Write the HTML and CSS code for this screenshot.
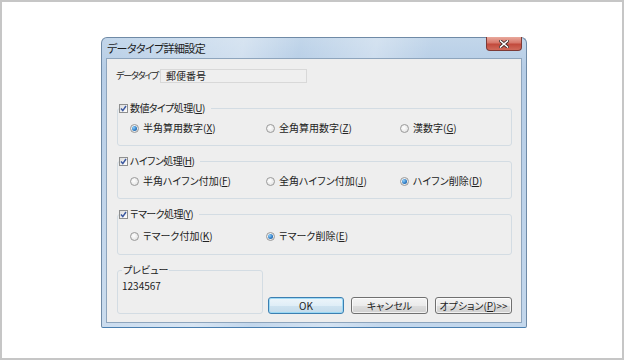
FILE: index.html
```html
<!DOCTYPE html>
<html lang="ja">
<head>
<meta charset="utf-8">
<title>データタイプ詳細設定</title>
<link rel="stylesheet" href="styles.css">
</head>
<body>
<div class="page">
  <div class="dialog">
    <div class="titlebar">
      <span class="title">データタイプ詳細設定</span>
      <span class="close">
        <svg width="10" height="8" viewBox="0 0 10 8"><path d="M1.5 1 L8.5 7 M8.5 1 L1.5 7" stroke="#3a2626" stroke-width="3.2" stroke-linecap="square"/><path d="M1.5 1 L8.5 7 M8.5 1 L1.5 7" stroke="#fff" stroke-width="1.6" stroke-linecap="square"/></svg>
      </span>
    </div>
    <div class="client">
      <div class="type-row">
        <span class="type-label">データタイプ</span>
        <span class="field">郵便番号</span>
      </div>

      <fieldset class="group">
        <legend class="legend"><span class="check"><svg width="7" height="7" viewBox="0 0 7 7"><path d="M1 3.6 L2.8 5.6 L6 1" fill="none" stroke="#3b58a0" stroke-width="1.5"/></svg></span><span class="legend-text">数値タイプ処理(<u>U</u>)</span></legend>
        <div class="options">
          <span class="opt"><span class="radio on"></span>半角算用数字(<u>X</u>)</span>
          <span class="opt"><span class="radio"></span>全角算用数字(<u>Z</u>)</span>
          <span class="opt"><span class="radio"></span>漢数字(<u>G</u>)</span>
        </div>
      </fieldset>

      <fieldset class="group">
        <legend class="legend"><span class="check"><svg width="7" height="7" viewBox="0 0 7 7"><path d="M1 3.6 L2.8 5.6 L6 1" fill="none" stroke="#3b58a0" stroke-width="1.5"/></svg></span><span class="legend-text">ハイフン処理(<u>H</u>)</span></legend>
        <div class="options">
          <span class="opt"><span class="radio"></span>半角ハイフン付加(<u>F</u>)</span>
          <span class="opt"><span class="radio"></span>全角ハイフン付加(<u>J</u>)</span>
          <span class="opt"><span class="radio on"></span>ハイフン削除(<u>D</u>)</span>
        </div>
      </fieldset>

      <fieldset class="group group-tall">
        <legend class="legend"><span class="check"><svg width="7" height="7" viewBox="0 0 7 7"><path d="M1 3.6 L2.8 5.6 L6 1" fill="none" stroke="#3b58a0" stroke-width="1.5"/></svg></span><span class="legend-text">〒マーク処理(<u>Y</u>)</span></legend>
        <div class="options">
          <span class="opt"><span class="radio"></span>〒マーク付加(<u>K</u>)</span>
          <span class="opt"><span class="radio on"></span>〒マーク削除(<u>E</u>)</span>
        </div>
      </fieldset>

      <div class="bottom">
        <fieldset class="preview">
          <legend class="preview-legend">プレビュー</legend>
          <div class="preview-text">1234567</div>
        </fieldset>
        <div class="buttons">
          <span class="btn btn-default">OK</span>
          <span class="btn">キャンセル</span>
          <span class="btn">オプション(<u>P</u>)&gt;&gt;</span>
        </div>
      </div>
    </div>
  </div>
</div>
</body>
</html>
```

FILE: styles.css
```css
html, body {
  margin: 0;
  padding: 0;
}

body {
  width: 624px;
  height: 360px;
  overflow: hidden;
  background: #ffffff;
  font-family: "Noto Sans CJK JP", "Noto Sans", sans-serif;
  font-feature-settings: "palt";
  color: #222222;
}

.page {
  box-sizing: border-box;
  width: 624px;
  height: 360px;
  border: 2px solid #c6c6c6;
  padding: 35px 0 0 99px;
}

.dialog {
  box-sizing: border-box;
  width: 426px;
  height: 291px;
  border: 1px solid #6f8aa6;
  border-bottom-color: #4a7fb0;
  border-radius: 6px 6px 2px 2px;
  background:
    linear-gradient(100deg, rgba(255,255,255,0) 0%, rgba(255,255,255,0.35) 30%, rgba(255,255,255,0) 42%, rgba(255,255,255,0.3) 58%, rgba(255,255,255,0) 70%),
    linear-gradient(#c2d6ea, #b6cde6 30px, #c3d7ec);
  padding: 0 4px 4px 4px;
  display: flex;
  flex-direction: column;
}

.titlebar {
  height: 20px;
  display: flex;
  justify-content: space-between;
  align-items: flex-start;
}

.title {
  font-size: 11px;
  line-height: 20px;
  letter-spacing: -0.6px;
  color: #1c1c1c;
  padding-left: 1px;
  white-space: nowrap;
}

.close {
  box-sizing: border-box;
  width: 36px;
  height: 14px;
  margin-top: -1px;
  border: 1px solid #7d3a36;
  border-top: none;
  border-radius: 0 0 4px 4px;
  background: linear-gradient(#e9a99c, #d7776a 45%, #c24a3c 55%, #d06a5a);
  display: flex;
  align-items: center;
  justify-content: center;
}

.client {
  box-sizing: border-box;
  height: 265px;
  border: 1px solid #8ea5bd;
  background: #eeeeee;
  padding: 10px 9px 0 10px;
  display: flex;
  flex-direction: column;
  font-size: 10px;
  line-height: 12px;
  white-space: nowrap;
}

.type-row {
  display: flex;
  align-items: center;
  height: 14px;
}

.type-label {
  width: 43px;
  margin-left: -1px;
  font-size: 9px;
  letter-spacing: -1.2px;
}

.field {
  box-sizing: border-box;
  width: 147px;
  height: 14px;
  margin-left: 1px;
  border: 1px solid #d8d8d8;
  background: #efefef;
  padding-left: 5px;
  line-height: 12px;
}

.group {
  margin: 19px 0 0 0;
  padding: 0;
  border: 1px solid #d3dce3;
  border-radius: 3px;
  min-width: 0;
  height: 44px;
  box-sizing: border-box;
}

.group + .group {
  margin-top: 9px;
}

.group-tall {
  height: 47px;
}

.legend {
  margin-left: 1px;
  padding: 0 6px 0 0;
  display: flex;
  align-items: center;
  height: 12px;
}

.legend-text {
  letter-spacing: -0.6px;
}

.check {
  box-sizing: border-box;
  width: 9px;
  height: 9px;
  border: 1px solid #8e8f8f;
  background: linear-gradient(135deg, #dcdcdc, #ffffff);
  margin-right: 2px;
  display: flex;
  align-items: center;
  justify-content: center;
}

.options {
  display: grid;
  grid-template-columns: 136px 134px auto;
  padding: 8px 0 0 12px;
}

.group-tall .options {
  padding-top: 10px;
}

.opt {
  display: flex;
  align-items: center;
}

.radio {
  box-sizing: border-box;
  width: 9px;
  height: 9px;
  border-radius: 50%;
  border: 1px solid #9a9a9a;
  background: radial-gradient(circle at 40% 40%, #ffffff, #dcdcdc);
  margin-right: 4px;
  display: flex;
  align-items: center;
  justify-content: center;
}

.radio.on::after {
  content: "";
  width: 5px;
  height: 5px;
  border-radius: 50%;
  background: radial-gradient(circle at 35% 35%, #8fd0fb, #2a78c2 60%, #1d4f8a);
}

u {
  text-decoration: underline;
  text-underline-offset: 1px;
}

.bottom {
  display: flex;
  align-items: flex-end;
  justify-content: space-between;
  margin-top: 9px;
}

.preview {
  box-sizing: border-box;
  width: 146px;
  height: 50px;
  margin: 0;
  padding: 4px 4px 0 4px;
  border: 1px solid #d3dce3;
  border-radius: 3px;
  min-width: 0;
}

.preview-legend {
  margin-left: 0;
  padding: 0 1px;
  line-height: 12px;
}

.preview-text {
  line-height: 12px;
}

.buttons {
  display: flex;
  gap: 7px;
}

.btn {
  box-sizing: border-box;
  width: 77px;
  height: 17px;
  border: 1px solid #707070;
  border-radius: 3px;
  background: linear-gradient(#f4f4f4, #ebebeb 50%, #dddddd 51%, #d0d0d0);
  box-shadow: inset 0 0 0 1px rgba(255,255,255,0.7);
  display: flex;
  align-items: center;
  justify-content: center;
  line-height: 12px;
  color: #1e1e1e;
}

.btn-default {
  width: 76px;
  border-color: #3c7fb1;
  background: linear-gradient(#edf5fa, #e0eef7 50%, #cfe3f0 51%, #c3dbeb);
  box-shadow: inset 0 0 0 1px rgba(150,215,245,0.9);
}
```
